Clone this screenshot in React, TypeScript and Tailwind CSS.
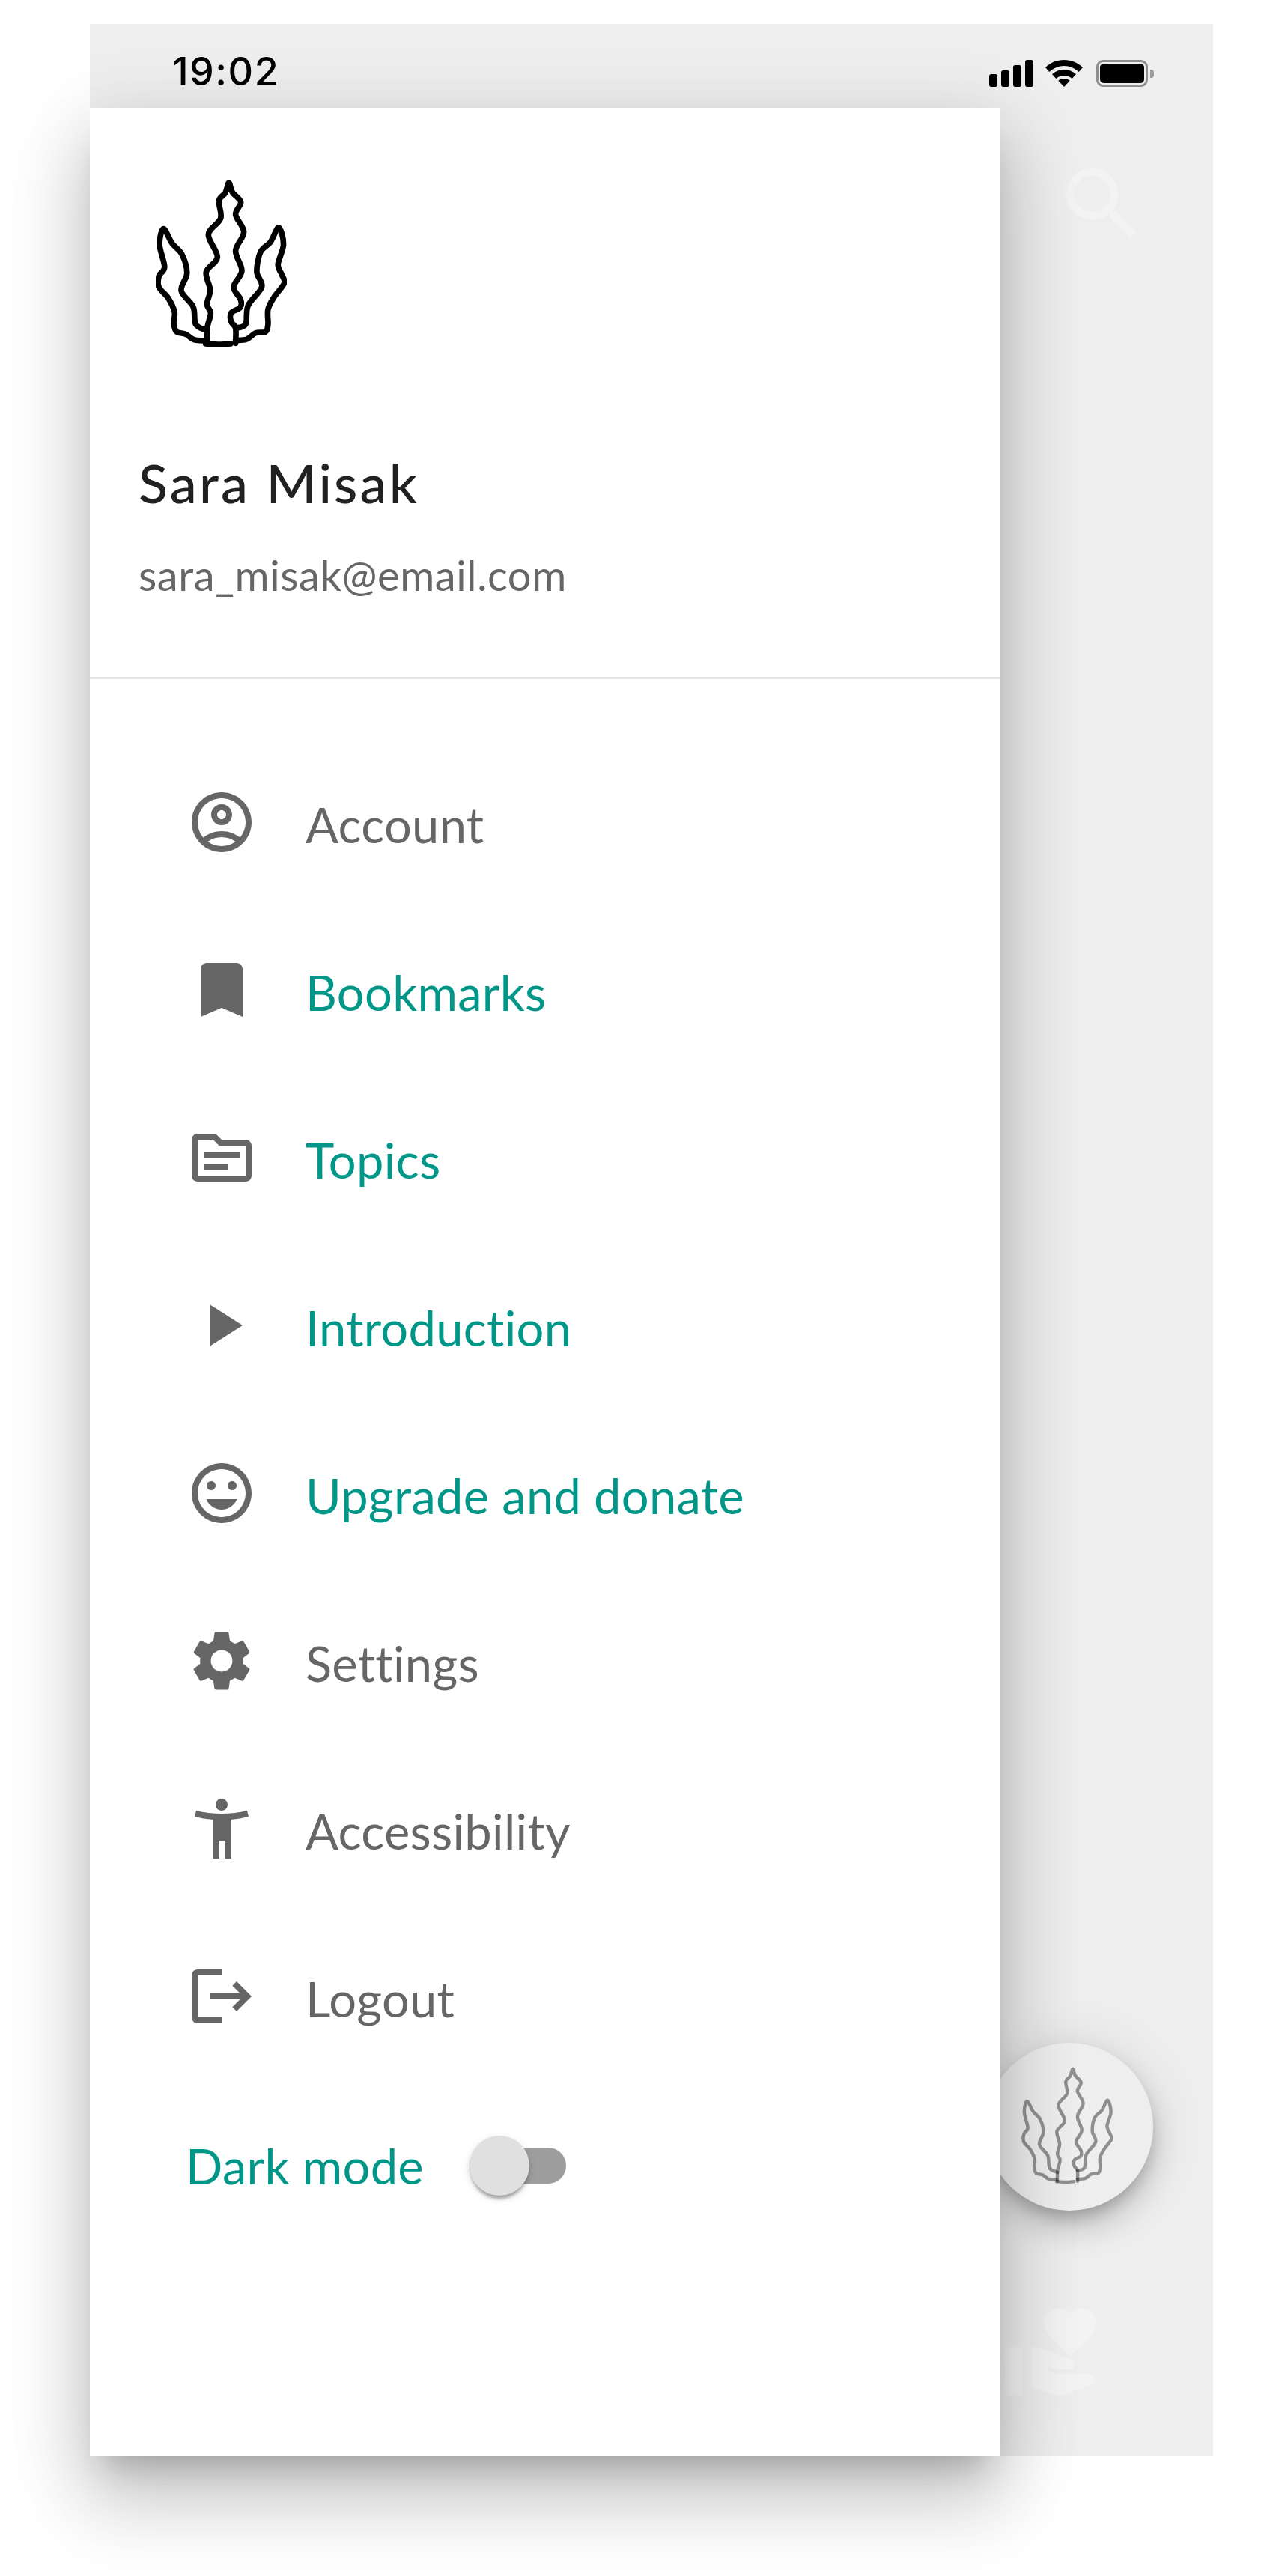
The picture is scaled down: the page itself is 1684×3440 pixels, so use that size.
import React from "react"

const GREY = "#666666"

function smooth(pts: number[][]) {
  let d = `M${pts[0][0]} ${pts[0][1]}`
  for (let i = 0; i < pts.length - 1; i++) {
    const p0 = pts[i - 1] || pts[i]
    const p1 = pts[i]
    const p2 = pts[i + 1]
    const p3 = pts[i + 2] || p2
    const c1x = p1[0] + (p2[0] - p0[0]) / 6
    const c1y = p1[1] + (p2[1] - p0[1]) / 6
    const c2x = p2[0] - (p3[0] - p1[0]) / 6
    const c2y = p2[1] - (p3[1] - p1[1]) / 6
    d += ` C${c1x} ${c1y} ${c2x} ${c2y} ${p2[0]} ${p2[1]}`
  }
  return d
}

// seaweed logo, traced in the coordinates of a 3x crop
const FRONDS = [
  [[290, 836], [291, 775], [305, 715], [290, 680], [303, 622], [287, 550], [332, 490], [296, 400], [345, 335], [338, 265], [364, 232], [378, 192], [392, 230], [426, 270], [405, 320], [438, 390], [405, 465], [430, 545], [397, 610], [425, 660], [424, 692], [387, 715], [387, 750], [405, 775], [405, 836]],
  [[285, 826], [238, 822], [205, 800], [168, 790], [157, 755], [160, 710], [135, 655], [97, 610], [98, 565], [120, 530], [100, 440], [116, 377], [150, 435], [190, 480], [210, 555], [187, 625], [235, 690], [245, 760], [290, 785]],
  [[405, 825], [450, 820], [485, 795], [525, 790], [535, 760], [535, 700], [560, 650], [600, 595], [590, 560], [575, 520], [597, 440], [578, 372], [545, 430], [505, 470], [490, 550], [510, 610], [455, 685], [445, 760], [405, 775]],
  [[285, 838], [340, 841], [385, 838]],
]

function Seaweed({ className, opacity = 1, width = 23 }: { className: string; opacity?: number; width?: number }) {
  return (
    <svg viewBox="85 180 525 670" className={className} fill="none" stroke="#000" strokeWidth={width} strokeLinecap="round" strokeLinejoin="round">
      {FRONDS.map((f, i) => (
        <path key={i} d={smooth(f)} strokeOpacity={opacity} />
      ))}
    </svg>
  )
}

function Icon({ d, className = "w-[96px] h-[96px]", fill = GREY }: { d: string; className?: string; fill?: string }) {
  return (
    <svg viewBox="0 0 24 24" className={className} fill={fill}>
      <path d={d} />
    </svg>
  )
}

const items = [
  { label: "Account", active: false, d: "M12 2C6.48 2 2 6.48 2 12s4.48 10 10 10 10-4.48 10-10S17.52 2 12 2zM7.35 18.5C8.66 17.56 10.26 17 12 17s3.34.56 4.65 1.5c-1.31.94-2.91 1.5-4.65 1.5s-3.34-.56-4.65-1.5zm10.79-1.38C16.45 15.8 14.32 15 12 15s-4.45.8-6.14 2.12C4.7 15.73 4 13.95 4 12c0-4.42 3.58-8 8-8s8 3.58 8 8c0 1.95-.7 3.73-1.86 5.12zM12 6c-1.93 0-3.5 1.57-3.5 3.5S10.07 13 12 13s3.5-1.57 3.5-3.5S13.93 6 12 6zm0 5c-.83 0-1.5-.67-1.5-1.5S11.17 8 12 8s1.5.67 1.5 1.5S12.83 11 12 11z" },
  { label: "Bookmarks", active: true, d: "M17 3H7c-1.1 0-2 .9-2 2v16l7-3 7 3V5c0-1.1-.9-2-2-2z" },
  { label: "Topics", active: true, d: "M20 6h-8l-2-2H4c-1.1 0-1.99.9-1.99 2L2 18c0 1.1.9 2 2 2h16c1.1 0 2-.9 2-2V8c0-1.1-.9-2-2-2zm0 12H4V6h5.17l2 2H20v10zm-6-2H6v-2h8v2zm4-4H6v-2h12v2z" },
  { label: "Introduction", active: true, d: "M8 5v14l11-7z" },
  { label: "Upgrade and donate", active: true, d: "M11.99 2C6.47 2 2 6.48 2 12s4.47 10 9.99 10C17.52 22 22 17.52 22 12S17.52 2 11.99 2zM12 20c-4.42 0-8-3.58-8-8s3.58-8 8-8 8 3.58 8 8-3.58 8-8 8zm3.5-9c.83 0 1.5-.67 1.5-1.5S16.33 8 15.5 8 14 8.67 14 9.5s.67 1.5 1.5 1.5zm-7 0c.83 0 1.5-.67 1.5-1.5S9.33 8 8.5 8 7 8.67 7 9.5 7.67 11 8.5 11zm3.5 6.5c2.33 0 4.31-1.46 5.11-3.5H6.89c.8 2.04 2.78 3.5 5.11 3.5z" },
  { label: "Settings", active: false, d: "M19.14 12.94c.04-.3.06-.61.06-.94 0-.32-.02-.64-.07-.94l2.03-1.58c.18-.14.23-.41.12-.61l-1.92-3.32c-.12-.22-.37-.29-.59-.22l-2.39.96c-.5-.38-1.03-.7-1.62-.94l-.36-2.54c-.04-.24-.24-.41-.48-.41h-3.84c-.24 0-.43.17-.47.41l-.36 2.54c-.59.24-1.13.57-1.62.94l-2.39-.96c-.22-.08-.47 0-.59.22L2.74 8.87c-.12.21-.08.47.12.61l2.03 1.58c-.05.3-.09.63-.09.94s.02.64.07.94l-2.03 1.58c-.18.14-.23.41-.12.61l1.92 3.32c.12.22.37.29.59.22l2.39-.96c.5.38 1.03.7 1.62.94l.36 2.54c.05.24.24.41.48.41h3.84c.24 0 .44-.17.47-.41l.36-2.54c.59-.24 1.13-.56 1.62-.94l2.39.96c.22.08.47 0 .59-.22l1.92-3.32c.12-.22.07-.47-.12-.61l-2.01-1.58zM12 15.6c-1.98 0-3.6-1.62-3.6-3.6s1.62-3.6 3.6-3.6 3.6 1.62 3.6 3.6-1.62 3.6-3.6 3.6z" },
  { label: "Accessibility", active: false, d: "M20.5 6c-2.61.7-5.67 1-8.5 1s-5.89-.3-8.5-1L3 8c1.86.5 4 .83 6 1v13h2v-6h2v6h2V9c2-.17 4.14-.5 6-1l-.5-2zM12 6c1.1 0 2-.9 2-2s-.9-2-2-2-2 .9-2 2 .9 2 2 2z" },
  { label: "Logout", active: false, d: "M17 7l-1.41 1.41L18.17 11H8v2h10.17l-2.58 2.58L17 17l5-5zM4 5h8V3H4c-1.1 0-2 .9-2 2v14c0 1.1.9 2 2 2h8v-2H4V5z" },
]

function StatusIcons() {
  return (
    <div className="flex items-end">
      <div className="flex items-end gap-[5.33px]">
        <div className="w-[10.7px] h-[17px] rounded-[3px] bg-black" />
        <div className="w-[10.7px] h-[22px] rounded-[3px] bg-black" />
        <div className="w-[10.7px] h-[29px] rounded-[3px] bg-black" />
        <div className="w-[10.7px] h-[36px] rounded-[3px] bg-black" />
      </div>
      <svg viewBox="0 0 50 36" className="w-[50px] h-[36px] ml-[16px]">
        <path d="M25 0C15.5 0 7 3.600 0 10l5.200 6C11 11 17.600 8 25 8s14 3 19.800 8L50 10C43 3.600 34.500 0 25 0z" />
        <path d="M25 13c-6.200 0-11.600 2.200-16 6l5.300 6c3-2.500 6.600-4 10.700-4s7.700 1.500 10.700 4L41 19c-4.400-3.800-9.800-6-16-6z" />
        <path d="M25 25c-3 0-5.600 1-7.700 2.800L25 36l7.700-8.200C30.600 26 28 25 25 25z" />
      </svg>
      <div className="flex items-center gap-[3px] ml-[18px]">
        <div className="w-[69px] h-[36px] rounded-[9px] border-[3px] border-[#8e8e8e] p-[2px]">
          <div className="w-full h-full rounded-[5px] bg-black" />
        </div>
        <div className="w-[5px] h-[11px] rounded-r-[4px] bg-[#9a9a9a]" />
      </div>
    </div>
  )
}

function Drawer() {
  return (
    <aside className="absolute top-[112px] left-0 bottom-0 w-[1216px] bg-white shadow-[0_32px_40px_-20px_rgba(0,0,0,0.2),0_64px_96px_8px_rgba(0,0,0,0.14),0_24px_100px_8px_rgba(0,0,0,0.12)]">
      <header className="h-[763px] pl-[65px] pt-[96px] border-b-[3px] border-[#e0e0e0] font-['Lato',sans-serif] [font-variant-ligatures:none]">
        <Seaweed className="w-[175px] h-[223px] ml-[23px]" />
        <h1 className="mt-[137px] text-[72px] leading-[88px] tracking-[3.2px] font-medium text-[#212121]">Sara Misak</h1>
        <p className="mt-[46px] text-[56px] leading-[68px] tracking-[0.6px] text-[#666666]">sara_misak@email.com</p>
      </header>
      <nav className="pt-[79px] pl-[128px] font-['Lato',sans-serif] text-[65px] tracking-[0.3px] [font-variant-ligatures:none]">
        {items.map((it) => (
          <a key={it.label} className="flex items-center gap-[64px] h-[224px]">
            <Icon d={it.d} />
            <span className={it.active ? "mt-[8px] text-[#009688]" : "mt-[8px] text-[#666666]"}>{it.label}</span>
          </a>
        ))}
        <div className="flex items-center h-[224px] mt-[1px]">
          <span className="mt-[4px] text-[#009688]">Dark mode</span>
          <div className="relative mt-[2px] ml-[61px] w-[129px] h-[48px] rounded-full bg-[#9e9e9e]">
            <div className="absolute -top-[16px] left-0 w-[80px] h-[80px] rounded-full bg-[#e0e0e0] shadow-[0_8px_4px_-4px_rgba(0,0,0,0.2),0_4px_4px_0_rgba(0,0,0,0.14),0_4px_12px_0_rgba(0,0,0,0.12)]" />
          </div>
        </div>
      </nav>
    </aside>
  )
}

export default function App() {
  return (
    <div className="h-[3440px] bg-white pt-[32px] pl-[120px]">
      <div className="relative w-[1500px] h-[3248px] bg-[#eeeeee]">
        <div className="h-[112px] flex justify-between items-start pt-[42px] pl-[110px] pr-[79px]">
          <span className="text-[52px] leading-[44px] tracking-[1.5px] font-medium text-black font-['Inter',sans-serif]">19:02</span>
          <div className="pt-[6px]"><StatusIcons /></div>
        </div>

        {/* what sits behind the drawer */}
        <Icon className="absolute left-[1288px] top-[176px] w-[128px] h-[128px]" fill="#f3f3f3" d="M15.5 14h-.79l-.28-.27C15.41 12.59 16 11.11 16 9.500 16 5.910 13.090 3 9.500 3S3 5.910 3 9.500 5.910 16 9.500 16c1.610 0 3.090-.59 4.230-1.570l.27.28v.79l5 4.990L20.490 19l-4.990-5zm-6 0C7.010 14 5 11.990 5 9.500S7.010 5 9.500 5 14 7.010 14 9.500 11.990 14 9.500 14z" />
        <div className="absolute left-[1196px] top-[2696px] w-[224px] h-[224px] rounded-full bg-[#eeeeee] shadow-[0_12px_20px_-4px_rgba(0,0,0,0.2),0_24px_40px_0_rgba(0,0,0,0.14),0_4px_72px_0_rgba(0,0,0,0.12)] flex items-center justify-center">
          <Seaweed className="w-[123px] h-[156px] -ml-[5px] -mt-[4px]" opacity={0.4} width={19} />
        </div>
        <Icon className="absolute left-[1216px] top-[3039px] w-[140px] h-[140px]" fill="#f3f3f3" d="M1 11h4v11H1zm15-7.750C16.650 2.490 17.660 2 18.700 2 20.550 2 22 3.450 22 5.300c0 2.270-2.910 4.900-6 7.700-3.090-2.810-6-5.440-6-7.700C10 3.450 11.450 2 13.300 2c1.040 0 2.050.49 2.700 1.250zM20 17h-7l-2.090-.73.33-.94L13 16h2.820c.65 0 1.180-.53 1.180-1.180 0-.49-.31-.93-.77-1.110L8.970 11H7v9.020L14 22l8-3c-.01-1.100-.89-2-2-2z" />

        <Drawer />
      </div>
    </div>
  )
}
